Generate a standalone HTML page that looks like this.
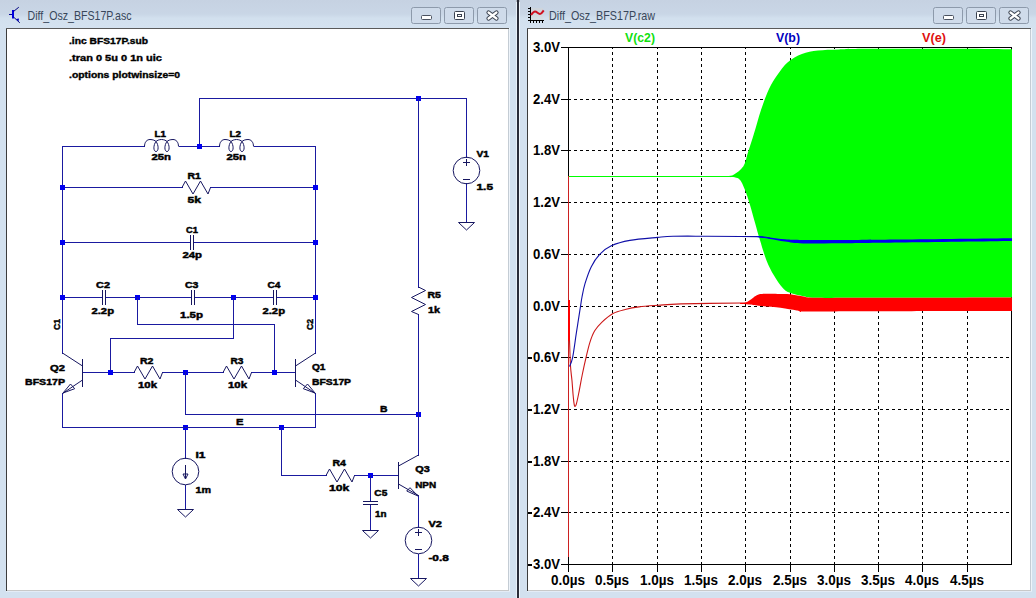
<!DOCTYPE html><html><head><meta charset="utf-8"><style>html,body{margin:0;padding:0;width:1036px;height:598px;overflow:hidden;background:#d3e1ef}svg{display:block}text{font-family:"Liberation Sans",sans-serif}</style></head><body>
<svg width="1036" height="598" viewBox="0 0 1036 598">
<rect x="0" y="0" width="1036" height="598" fill="#d3e1ef"/>
<defs><linearGradient id="tb" x1="0" y1="0" x2="0" y2="1"><stop offset="0" stop-color="#c6d2e2"/><stop offset="0.5" stop-color="#c9d6e6"/><stop offset="0.65" stop-color="#d2e0ee"/><stop offset="1" stop-color="#d4e2f0"/></linearGradient></defs>
<rect x="0" y="0" width="1036" height="28" fill="url(#tb)"/>
<rect x="6" y="28" width="503" height="563" fill="#ffffff"/>
<rect x="6" y="28" width="1" height="563" fill="#3c3c3c"/>
<rect x="6" y="28" width="503" height="1" fill="#5a5a5a"/>
<rect x="508" y="29" width="1" height="562" fill="#c4ccd4"/>
<rect x="7" y="590" width="502" height="1" fill="#c8c8c8"/>
<rect x="509" y="28" width="1" height="564" fill="#eef4fa"/>
<rect x="6" y="591" width="504" height="1" fill="#e4ecf6"/>
<rect x="411.5" y="7.5" width="29" height="16" rx="2" fill="#cfdbea" stroke="#8d9aab" stroke-width="1"/>
<rect x="444.5" y="7.5" width="29" height="16" rx="2" fill="#cfdbea" stroke="#8d9aab" stroke-width="1"/>
<rect x="477.5" y="7.5" width="29" height="16" rx="2" fill="#cfdbea" stroke="#8d9aab" stroke-width="1"/>
<rect x="421.5" y="15.5" width="10" height="4" rx="1" fill="#fff" stroke="#4a5260" stroke-width="1"/>
<rect x="454.5" y="11.5" width="10" height="8" rx="1" fill="#fff" stroke="#3a4250" stroke-width="1"/>
<rect x="457.5" y="14.5" width="4" height="2" fill="#fff" stroke="#3a4250" stroke-width="1"/>
<path d="M488.5,12.5 L496.5,18.5 M496.5,12.5 L488.5,18.5" stroke="#3a4250" stroke-width="4.2" stroke-linecap="round"/>
<path d="M488.5,12.5 L496.5,18.5 M496.5,12.5 L488.5,18.5" stroke="#ffffff" stroke-width="2.2" stroke-linecap="round"/>
<text x="27.5" y="20" font-size="12.6" font-weight="normal" text-anchor="start" fill="#38465a" textLength="104" lengthAdjust="spacingAndGlyphs" >Diff_Osz_BFS17P.asc</text>
<rect x="527" y="28" width="504" height="563" fill="#ffffff"/>
<rect x="527" y="28" width="1" height="563" fill="#3c3c3c"/>
<rect x="527" y="28" width="504" height="1" fill="#5a5a5a"/>
<rect x="1030" y="29" width="1" height="562" fill="#c4ccd4"/>
<rect x="528" y="590" width="503" height="1" fill="#c8c8c8"/>
<rect x="1031" y="28" width="1" height="564" fill="#eef4fa"/>
<rect x="527" y="591" width="505" height="1" fill="#e4ecf6"/>
<rect x="933.5" y="7.5" width="29" height="16" rx="2" fill="#cfdbea" stroke="#8d9aab" stroke-width="1"/>
<rect x="966.5" y="7.5" width="29" height="16" rx="2" fill="#cfdbea" stroke="#8d9aab" stroke-width="1"/>
<rect x="999.5" y="7.5" width="29" height="16" rx="2" fill="#cfdbea" stroke="#8d9aab" stroke-width="1"/>
<rect x="943.5" y="15.5" width="10" height="4" rx="1" fill="#fff" stroke="#4a5260" stroke-width="1"/>
<rect x="976.5" y="11.5" width="10" height="8" rx="1" fill="#fff" stroke="#3a4250" stroke-width="1"/>
<rect x="979.5" y="14.5" width="4" height="2" fill="#fff" stroke="#3a4250" stroke-width="1"/>
<path d="M1010.5,12.5 L1018.5,18.5 M1018.5,12.5 L1010.5,18.5" stroke="#3a4250" stroke-width="4.2" stroke-linecap="round"/>
<path d="M1010.5,12.5 L1018.5,18.5 M1018.5,12.5 L1010.5,18.5" stroke="#ffffff" stroke-width="2.2" stroke-linecap="round"/>
<text x="549" y="20" font-size="12.6" font-weight="normal" text-anchor="start" fill="#38465a" textLength="106" lengthAdjust="spacingAndGlyphs" >Diff_Osz_BFS17P.raw</text>
<rect x="517" y="0" width="2" height="598" fill="#2a2c38"/><rect x="519" y="0" width="1" height="598" fill="#eef4fa"/><rect x="516" y="0" width="1" height="598" fill="#e8f0f8"/><rect x="516.5" y="0" width="3" height="2" rx="1" fill="#2a2c38"/>
<rect x="12" y="10" width="2" height="8.5" fill="#0000e0"/><rect x="9" y="14" width="3" height="1" fill="#000090"/><path d="M13.5,11.5 L18.8,7.2 M13.5,17 L19.8,22.8" stroke="#000080" stroke-width="1" fill="none"/><path d="M16,19 L19,18.5 L18.5,21.5 Z" fill="#0000c0"/>
<g><rect x="531" y="8" width="12" height="12" fill="#ddd6cc" opacity="0.35"/><rect x="530" y="7" width="1" height="14" fill="#000"/><rect x="528" y="20" width="16" height="1" fill="#000"/><path d="M528,8.5h2M528,11.5h2M528,14.5h2M528,17.5h2M530.5,21v2M533.5,21v2M536.5,21v2M539.5,21v2M542.5,21v2" stroke="#000" fill="none"/><path d="M531,15 C532.5,13 533.5,11.6 535,11.6 C537,11.6 538,14 540,14 C541.5,14 542.5,12 543.7,10.4" stroke="#d01020" stroke-width="2" fill="none"/></g>
<g stroke="#000" stroke-width="1" stroke-dasharray="3 3" shape-rendering="crispEdges">
<line x1="612.5" y1="47" x2="612.5" y2="564" stroke-dashoffset="1"/>
<line x1="657.5" y1="47" x2="657.5" y2="564" stroke-dashoffset="1"/>
<line x1="701.5" y1="47" x2="701.5" y2="564" stroke-dashoffset="1"/>
<line x1="745.5" y1="47" x2="745.5" y2="564" stroke-dashoffset="1"/>
<line x1="790.5" y1="47" x2="790.5" y2="564" stroke-dashoffset="1"/>
<line x1="834.5" y1="47" x2="834.5" y2="564" stroke-dashoffset="1"/>
<line x1="878.5" y1="47" x2="878.5" y2="564" stroke-dashoffset="1"/>
<line x1="922.5" y1="47" x2="922.5" y2="564" stroke-dashoffset="1"/>
<line x1="967.5" y1="47" x2="967.5" y2="564" stroke-dashoffset="1"/>
<line x1="568" y1="99.5" x2="1011" y2="99.5"/>
<line x1="568" y1="150.5" x2="1011" y2="150.5"/>
<line x1="568" y1="202.5" x2="1011" y2="202.5"/>
<line x1="568" y1="254.5" x2="1011" y2="254.5"/>
<line x1="568" y1="306.5" x2="1011" y2="306.5"/>
<line x1="568" y1="357.5" x2="1011" y2="357.5"/>
<line x1="568" y1="409.5" x2="1011" y2="409.5"/>
<line x1="568" y1="461.5" x2="1011" y2="461.5"/>
<line x1="568" y1="512.5" x2="1011" y2="512.5"/>
</g>
<rect x="568.5" y="47.5" width="443" height="517" fill="none" stroke="#000" shape-rendering="crispEdges"/>
<g stroke="#000" shape-rendering="crispEdges">
<line x1="561" y1="47.5" x2="568" y2="47.5"/>
<line x1="561" y1="99.5" x2="568" y2="99.5"/>
<line x1="561" y1="150.5" x2="568" y2="150.5"/>
<line x1="561" y1="202.5" x2="568" y2="202.5"/>
<line x1="561" y1="254.5" x2="568" y2="254.5"/>
<line x1="561" y1="306.5" x2="568" y2="306.5"/>
<line x1="561" y1="357.5" x2="568" y2="357.5"/>
<line x1="561" y1="409.5" x2="568" y2="409.5"/>
<line x1="561" y1="461.5" x2="568" y2="461.5"/>
<line x1="561" y1="512.5" x2="568" y2="512.5"/>
<line x1="561" y1="564.5" x2="568" y2="564.5"/>
<line x1="568.5" y1="564" x2="568.5" y2="572"/>
<line x1="612.5" y1="564" x2="612.5" y2="572"/>
<line x1="657.5" y1="564" x2="657.5" y2="572"/>
<line x1="701.5" y1="564" x2="701.5" y2="572"/>
<line x1="745.5" y1="564" x2="745.5" y2="572"/>
<line x1="790.5" y1="564" x2="790.5" y2="572"/>
<line x1="834.5" y1="564" x2="834.5" y2="572"/>
<line x1="878.5" y1="564" x2="878.5" y2="572"/>
<line x1="922.5" y1="564" x2="922.5" y2="572"/>
<line x1="967.5" y1="564" x2="967.5" y2="572"/>
</g>
<text x="533" y="52" font-size="14" font-weight="bold" text-anchor="start" fill="#000" textLength="27" lengthAdjust="spacingAndGlyphs" >3.0V</text>
<text x="533" y="104" font-size="14" font-weight="bold" text-anchor="start" fill="#000" textLength="27" lengthAdjust="spacingAndGlyphs" >2.4V</text>
<text x="533" y="155" font-size="14" font-weight="bold" text-anchor="start" fill="#000" textLength="27" lengthAdjust="spacingAndGlyphs" >1.8V</text>
<text x="533" y="207" font-size="14" font-weight="bold" text-anchor="start" fill="#000" textLength="27" lengthAdjust="spacingAndGlyphs" >1.2V</text>
<text x="533" y="259" font-size="14" font-weight="bold" text-anchor="start" fill="#000" textLength="27" lengthAdjust="spacingAndGlyphs" >0.6V</text>
<text x="533" y="311" font-size="14" font-weight="bold" text-anchor="start" fill="#000" textLength="27" lengthAdjust="spacingAndGlyphs" >0.0V</text>
<rect x="528" y="357" width="4" height="2" fill="#000"/>
<text x="533" y="362" font-size="14" font-weight="bold" text-anchor="start" fill="#000" textLength="27" lengthAdjust="spacingAndGlyphs" >0.6V</text>
<rect x="528" y="409" width="4" height="2" fill="#000"/>
<text x="533" y="414" font-size="14" font-weight="bold" text-anchor="start" fill="#000" textLength="27" lengthAdjust="spacingAndGlyphs" >1.2V</text>
<rect x="528" y="461" width="4" height="2" fill="#000"/>
<text x="533" y="466" font-size="14" font-weight="bold" text-anchor="start" fill="#000" textLength="27" lengthAdjust="spacingAndGlyphs" >1.8V</text>
<rect x="528" y="512" width="4" height="2" fill="#000"/>
<text x="533" y="517" font-size="14" font-weight="bold" text-anchor="start" fill="#000" textLength="27" lengthAdjust="spacingAndGlyphs" >2.4V</text>
<rect x="528" y="564" width="4" height="2" fill="#000"/>
<text x="533" y="569" font-size="14" font-weight="bold" text-anchor="start" fill="#000" textLength="27" lengthAdjust="spacingAndGlyphs" >3.0V</text>
<text x="551" y="584.5" font-size="14" font-weight="bold" text-anchor="start" fill="#000" textLength="34" lengthAdjust="spacingAndGlyphs" >0.0µs</text>
<text x="595" y="584.5" font-size="14" font-weight="bold" text-anchor="start" fill="#000" textLength="34" lengthAdjust="spacingAndGlyphs" >0.5µs</text>
<text x="640" y="584.5" font-size="14" font-weight="bold" text-anchor="start" fill="#000" textLength="34" lengthAdjust="spacingAndGlyphs" >1.0µs</text>
<text x="684" y="584.5" font-size="14" font-weight="bold" text-anchor="start" fill="#000" textLength="34" lengthAdjust="spacingAndGlyphs" >1.5µs</text>
<text x="728" y="584.5" font-size="14" font-weight="bold" text-anchor="start" fill="#000" textLength="34" lengthAdjust="spacingAndGlyphs" >2.0µs</text>
<text x="773" y="584.5" font-size="14" font-weight="bold" text-anchor="start" fill="#000" textLength="34" lengthAdjust="spacingAndGlyphs" >2.5µs</text>
<text x="817" y="584.5" font-size="14" font-weight="bold" text-anchor="start" fill="#000" textLength="34" lengthAdjust="spacingAndGlyphs" >3.0µs</text>
<text x="861" y="584.5" font-size="14" font-weight="bold" text-anchor="start" fill="#000" textLength="34" lengthAdjust="spacingAndGlyphs" >3.5µs</text>
<text x="905" y="584.5" font-size="14" font-weight="bold" text-anchor="start" fill="#000" textLength="34" lengthAdjust="spacingAndGlyphs" >4.0µs</text>
<text x="950" y="584.5" font-size="14" font-weight="bold" text-anchor="start" fill="#000" textLength="34" lengthAdjust="spacingAndGlyphs" >4.5µs</text>
<text x="625" y="42" font-size="13" font-weight="bold" text-anchor="start" fill="#10e010" textLength="30" lengthAdjust="spacingAndGlyphs" >V(c2)</text>
<text x="776" y="42" font-size="13" font-weight="bold" text-anchor="start" fill="#0000c0" textLength="24" lengthAdjust="spacingAndGlyphs" >V(b)</text>
<text x="922" y="42" font-size="13" font-weight="bold" text-anchor="start" fill="#e01010" textLength="24" lengthAdjust="spacingAndGlyphs" >V(e)</text>
<svg x="0" y="0" width="1036" height="598" overflow="hidden"><defs><clipPath id="pc"><rect x="568" y="47" width="444" height="517"/></clipPath></defs><g clip-path="url(#pc)">
<line x1="568" y1="176.5" x2="740" y2="176.5" stroke="#00ff00" stroke-width="1.2"/>
<path d="M728.00,176.00 C729.00,175.75 731.43,176.12 734.00,174.50 C736.57,172.88 741.07,170.00 743.40,166.30 C745.73,162.60 746.23,157.75 748.00,152.30 C749.77,146.85 751.83,140.65 754.00,133.60 C756.17,126.55 758.50,117.43 761.00,110.00 C763.50,102.57 766.28,94.83 769.00,89.00 C771.72,83.17 774.17,79.47 777.30,75.00 C780.43,70.53 783.70,65.70 787.80,62.20 C791.90,58.70 796.87,55.95 801.90,54.00 C806.93,52.05 811.82,51.27 818.00,50.50 C824.18,49.73 830.33,49.68 839.00,49.40 C847.67,49.12 849.83,48.90 870.00,48.80 C890.17,48.70 936.33,48.72 960.00,48.80 C983.67,48.88 1003.33,49.22 1012.00,49.30 L1012.00,297.40 C988.00,297.47 900.72,297.73 868.00,297.80 C835.28,297.87 826.45,298.07 815.70,297.80 C804.95,297.53 807.78,297.03 803.50,296.20 C799.22,295.37 793.45,294.17 790.00,292.80 C786.55,291.43 785.47,290.88 782.80,288.00 C780.13,285.12 776.72,280.10 774.00,275.50 C771.28,270.90 768.83,266.27 766.50,260.40 C764.17,254.53 761.92,246.58 760.00,240.30 C758.08,234.02 756.67,228.58 755.00,222.70 C753.33,216.82 751.67,210.45 750.00,205.00 C748.33,199.55 746.87,194.37 745.00,190.00 C743.13,185.63 741.63,180.97 738.80,178.80 C735.97,176.63 729.80,177.30 728.00,177.00 Z" fill="#00ff00"/>
<rect x="568" y="176" width="1" height="381" fill="#cc2020"/>
<rect x="568" y="300" width="2" height="41" fill="#ff0000"/>
<path d="M569.50,340.00 C569.67,344.33 570.08,359.20 570.50,366.00 C570.92,372.80 571.55,375.80 572.00,380.80 C572.45,385.80 572.78,391.83 573.20,396.00 C573.62,400.17 573.97,404.50 574.50,405.80 C575.03,407.10 575.60,406.37 576.40,403.80 C577.20,401.23 578.33,395.20 579.30,390.40 C580.27,385.60 581.08,380.45 582.20,375.00 C583.32,369.55 584.72,363.15 586.00,357.70 C587.28,352.25 588.45,346.78 589.90,342.30 C591.35,337.82 592.68,334.17 594.70,330.80 C596.72,327.43 598.95,324.98 602.00,322.10 C605.05,319.22 609.13,315.60 613.00,313.50 C616.87,311.40 620.87,310.60 625.20,309.50 C629.53,308.40 633.50,307.60 639.00,306.90 C644.50,306.20 651.23,305.80 658.20,305.30 C665.17,304.80 666.90,304.28 680.80,303.90 C694.70,303.52 730.73,303.15 741.60,303.00 C752.47,302.85 745.27,303.00 746.00,303.00" fill="none" stroke="#cc1818" stroke-width="1.1"/>
<path d="M740.00,303.20 C740.83,303.13 743.50,303.20 745.00,302.80 C746.50,302.40 747.58,301.70 749.00,300.80 C750.42,299.90 752.00,298.40 753.50,297.40 C755.00,296.40 756.25,295.40 758.00,294.80 C759.75,294.20 760.70,293.95 764.00,293.80 C767.30,293.65 773.47,293.83 777.80,293.90 C782.13,293.97 785.93,293.82 790.00,294.20 C794.07,294.58 797.92,295.60 802.20,296.20 C806.48,296.80 804.73,297.53 815.70,297.80 C826.67,298.07 835.28,297.87 868.00,297.80 C900.72,297.73 988.00,297.47 1012.00,297.40 L1012.00,311.00 C988.00,311.03 902.07,311.13 868.00,311.20 C833.93,311.27 819.47,311.53 807.60,311.40 C795.73,311.27 801.32,311.02 796.80,310.40 C792.28,309.78 786.82,308.48 780.50,307.70 C774.18,306.92 764.15,306.23 758.90,305.70 C753.65,305.17 752.15,304.77 749.00,304.50 C745.85,304.23 741.50,304.17 740.00,304.10 Z" fill="#ff0000"/>
<path d="M569.50,366.50 C570.02,365.03 571.45,363.33 572.60,357.70 C573.75,352.07 575.12,341.03 576.40,332.70 C577.68,324.37 579.37,313.65 580.30,307.70 C581.23,301.75 581.22,301.00 582.00,297.00 C582.78,293.00 583.45,288.75 585.00,283.70 C586.55,278.65 588.85,271.60 591.30,266.70 C593.75,261.80 596.37,257.78 599.70,254.30 C603.03,250.82 606.27,248.12 611.30,245.80 C616.33,243.48 622.17,241.80 629.90,240.40 C637.63,239.00 650.52,238.08 657.70,237.40 C664.88,236.72 665.95,236.50 673.00,236.30 C680.05,236.10 685.88,236.15 700.00,236.20 C714.12,236.25 746.03,236.30 757.70,236.60 C769.37,236.90 767.95,237.77 770.00,238.00" fill="none" stroke="#1010a8" stroke-width="1.1"/>
<path d="M757.00,236.10 C759.17,236.33 765.33,236.97 770.00,237.50 C774.67,238.03 779.50,238.88 785.00,239.30 C790.50,239.72 793.83,239.88 803.00,240.00 C812.17,240.12 823.83,240.08 840.00,240.00 C856.17,239.92 871.33,239.80 900.00,239.50 C928.67,239.20 993.33,238.42 1012.00,238.20 L1012.00,241.00 C993.33,241.25 928.67,242.12 900.00,242.50 C871.33,242.88 856.17,243.13 840.00,243.30 C823.83,243.47 812.17,243.80 803.00,243.50 C793.83,243.20 790.50,242.25 785.00,241.50 C779.50,240.75 774.67,239.73 770.00,239.00 C765.33,238.27 759.17,237.42 757.00,237.10 Z" fill="#0000f0"/>
</g></svg>
<text x="69" y="44" font-size="8.5" font-weight="bold" text-anchor="start" fill="#000" textLength="79" lengthAdjust="spacingAndGlyphs" stroke="#000" stroke-width="0.35" >.inc BFS17P.sub</text>
<text x="69" y="61" font-size="8.5" font-weight="bold" text-anchor="start" fill="#000" textLength="93" lengthAdjust="spacingAndGlyphs" stroke="#000" stroke-width="0.35" >.tran 0 5u 0 1n uic</text>
<text x="69" y="78" font-size="8.5" font-weight="bold" text-anchor="start" fill="#000" textLength="111" lengthAdjust="spacingAndGlyphs" stroke="#000" stroke-width="0.35" >.options plotwinsize=0</text>
<rect x="199" y="98" width="268" height="1" fill="#1a1aa0"/>
<rect x="416" y="96" width="5" height="5" fill="#0000f0"/>
<rect x="199" y="98" width="1" height="49" fill="#1a1aa0"/>
<rect x="466" y="98" width="1" height="60" fill="#1a1aa0"/>
<rect x="62" y="146" width="83" height="1" fill="#1a1aa0"/>
<rect x="179" y="146" width="41" height="1" fill="#1a1aa0"/>
<rect x="254" y="146" width="62" height="1" fill="#1a1aa0"/>
<rect x="197" y="144" width="5" height="5" fill="#0000f0"/>
<rect x="62" y="146" width="1" height="208" fill="#1a1aa0"/>
<rect x="315" y="146" width="1" height="208" fill="#1a1aa0"/>
<rect x="62" y="187" width="121" height="1" fill="#1a1aa0"/>
<rect x="210" y="187" width="106" height="1" fill="#1a1aa0"/>
<rect x="60" y="185" width="5" height="5" fill="#0000f0"/>
<rect x="313" y="185" width="5" height="5" fill="#0000f0"/>
<rect x="62" y="242" width="129" height="1" fill="#1a1aa0"/>
<rect x="194" y="242" width="122" height="1" fill="#1a1aa0"/>
<rect x="60" y="240" width="5" height="5" fill="#0000f0"/>
<rect x="313" y="240" width="5" height="5" fill="#0000f0"/>
<rect x="62" y="297" width="41" height="1" fill="#1a1aa0"/>
<rect x="105" y="297" width="87" height="1" fill="#1a1aa0"/>
<rect x="194" y="297" width="80" height="1" fill="#1a1aa0"/>
<rect x="276" y="297" width="40" height="1" fill="#1a1aa0"/>
<rect x="60" y="295" width="5" height="5" fill="#0000f0"/>
<rect x="135" y="295" width="5" height="5" fill="#0000f0"/>
<rect x="231" y="295" width="5" height="5" fill="#0000f0"/>
<rect x="313" y="295" width="5" height="5" fill="#0000f0"/>
<rect x="137" y="297" width="1" height="28" fill="#1a1aa0"/>
<rect x="137" y="324" width="138" height="1" fill="#1a1aa0"/>
<rect x="274" y="324" width="1" height="49" fill="#1a1aa0"/>
<rect x="233" y="297" width="1" height="42" fill="#1a1aa0"/>
<rect x="110" y="338" width="124" height="1" fill="#1a1aa0"/>
<rect x="110" y="338" width="1" height="35" fill="#1a1aa0"/>
<rect x="82" y="372" width="53" height="1" fill="#1a1aa0"/>
<rect x="162" y="372" width="62" height="1" fill="#1a1aa0"/>
<rect x="251" y="372" width="45" height="1" fill="#1a1aa0"/>
<rect x="108" y="370" width="5" height="5" fill="#0000f0"/>
<rect x="183" y="370" width="5" height="5" fill="#0000f0"/>
<rect x="272" y="370" width="5" height="5" fill="#0000f0"/>
<rect x="185" y="372" width="1" height="43" fill="#1a1aa0"/>
<rect x="185" y="427" width="1" height="32" fill="#1a1aa0"/>
<rect x="185" y="414" width="234" height="1" fill="#1a1aa0"/>
<rect x="183" y="425" width="5" height="5" fill="#0000f0"/>
<rect x="416" y="412" width="5" height="5" fill="#0000f0"/>
<rect x="62" y="393" width="1" height="35" fill="#1a1aa0"/>
<rect x="315" y="393" width="1" height="35" fill="#1a1aa0"/>
<rect x="62" y="427" width="254" height="1" fill="#1a1aa0"/>
<rect x="279" y="425" width="5" height="5" fill="#0000f0"/>
<rect x="418" y="98" width="1" height="190" fill="#1a1aa0"/>
<rect x="418" y="314" width="1" height="142" fill="#1a1aa0"/>
<rect x="281" y="427" width="1" height="49" fill="#1a1aa0"/>
<rect x="281" y="475" width="46" height="1" fill="#1a1aa0"/>
<rect x="354" y="475" width="45" height="1" fill="#1a1aa0"/>
<rect x="368" y="473" width="5" height="5" fill="#0000f0"/>
<rect x="370" y="475" width="1" height="27" fill="#1a1aa0"/>
<rect x="370" y="504" width="1" height="27" fill="#1a1aa0"/>
<rect x="185" y="485" width="1" height="25" fill="#1a1aa0"/>
<rect x="466" y="183" width="1" height="40" fill="#1a1aa0"/>
<rect x="418" y="495" width="1" height="33" fill="#1a1aa0"/>
<rect x="418" y="554" width="1" height="25" fill="#1a1aa0"/>
<g stroke="#161660" stroke-width="1" fill="none">
<path d="M144.5,146.5 C144.5,142 147,139.5 150,139.5 C153,139.5 155,140.5 156,141.5 C157,140.5 159,139.5 161.5,139.5 C164,139.5 166,140.5 167,141.5 C168,140.5 170,139.5 173,139.5 C176,139.5 178.5,142 178.5,146.5"/>
<path d="M156,141.5 C153.2,145 153.2,151.5 156,151.5 C158.8,151.5 158.8,145 156,141.5 Z"/>
<path d="M167,141.5 C164.2,145 164.2,151.5 167,151.5 C169.8,151.5 169.8,145 167,141.5 Z"/>
<path d="M219.5,146.5 C219.5,142 222,139.5 225,139.5 C228,139.5 230,140.5 231,141.5 C232,140.5 234,139.5 236.5,139.5 C239,139.5 241,140.5 242,141.5 C243,140.5 245,139.5 248,139.5 C251,139.5 253.5,142 253.5,146.5"/>
<path d="M231,141.5 C228.2,145 228.2,151.5 231,151.5 C233.8,151.5 233.8,145 231,141.5 Z"/>
<path d="M242,141.5 C239.2,145 239.2,151.5 242,151.5 C244.8,151.5 244.8,145 242,141.5 Z"/>
<polyline points="182,187.5 185.5,181 193,194 200.5,181 208,194 210.5,187.5"/>
<polyline points="134,372.5 137.5,366 145,379 152.5,366 160,379 162.5,372.5"/>
<polyline points="223,372.5 226.5,366 234,379 241.5,366 249,379 251.5,372.5"/>
<polyline points="326,475.5 329.5,469 337,482 344.5,469 352,482 354.5,475.5"/>
<polyline points="418.5,287 425.5,290.5 411.5,297.5 425.5,304.5 411.5,311.5 418.5,314.5"/>
</g>
<g stroke="#161660" stroke-width="1" fill="none" shape-rendering="crispEdges">
<path d="M190.0,235 V250 M193.0,235 V250"/>
<path d="M102.0,290 V305 M105.0,290 V305"/>
<path d="M191.0,290 V305 M194.0,290 V305"/>
<path d="M273.0,290 V305 M276.0,290 V305"/>
<path d="M363,501.5 H378 M363,504.5 H378"/>
</g>
<g stroke="#161660" stroke-width="1" fill="none">
<path d="M82.5,359 V387"/>
<path d="M62.5,353 L82.5,366"/>
<path d="M82.5,380 L62.5,393.5"/>
<path d="M295.5,359 V387"/>
<path d="M315.5,353 L295.5,366"/>
<path d="M295.5,380 L315.5,393.5"/>
<path d="M63,393 L70.5,384 L74.7,388.7 Z"/>
<path d="M315,393 L307.5,384 L303.3,388.7 Z"/>
<path d="M398.5,462 V489 M398.5,466 L418.5,455 M398.5,484 L418.5,495.5"/>
<path d="M418,496 L406.7,491 L410,487.7 Z"/>
<circle cx="466.5" cy="170.5" r="13.3"/><circle cx="185.5" cy="471.5" r="13.3"/><circle cx="418.5" cy="540.5" r="13.3"/>
<path d="M463,162.5 H470 M466.5,159 V166 M463,179.5 H470"/>
<path d="M415,532.5 H422 M418.5,529 V536 M415,549.5 H422"/>
<path d="M185.5,465 V478 M183,474 L185.5,479 L188,474 Z"/>
<path d="M458.5,222.5 H474.5 L466.5,230.0 Z"/>
<path d="M177.5,509.5 H193.5 L185.5,517.0 Z"/>
<path d="M362.5,530.5 H378.5 L370.5,538.0 Z"/>
<path d="M410.5,578.5 H426.5 L418.5,586.0 Z"/>
</g>
<text x="154.5" y="137" font-size="9" font-weight="bold" text-anchor="start" fill="#000" textLength="11.5" lengthAdjust="spacingAndGlyphs" stroke="#000" stroke-width="0.45" >L1</text>
<text x="151.5" y="160" font-size="9" font-weight="bold" text-anchor="start" fill="#000" textLength="19.5" lengthAdjust="spacingAndGlyphs" stroke="#000" stroke-width="0.45" >25n</text>
<text x="229.5" y="137" font-size="9" font-weight="bold" text-anchor="start" fill="#000" textLength="11.5" lengthAdjust="spacingAndGlyphs" stroke="#000" stroke-width="0.45" >L2</text>
<text x="226.5" y="160" font-size="9" font-weight="bold" text-anchor="start" fill="#000" textLength="19.5" lengthAdjust="spacingAndGlyphs" stroke="#000" stroke-width="0.45" >25n</text>
<text x="187.5" y="179" font-size="9" font-weight="bold" text-anchor="start" fill="#000" textLength="13.5" lengthAdjust="spacingAndGlyphs" stroke="#000" stroke-width="0.45" >R1</text>
<text x="187.5" y="203" font-size="9" font-weight="bold" text-anchor="start" fill="#000" textLength="13.5" lengthAdjust="spacingAndGlyphs" stroke="#000" stroke-width="0.45" >5k</text>
<text x="186" y="233" font-size="9" font-weight="bold" text-anchor="start" fill="#000" textLength="12" lengthAdjust="spacingAndGlyphs" stroke="#000" stroke-width="0.45" >C1</text>
<text x="182.5" y="258" font-size="9" font-weight="bold" text-anchor="start" fill="#000" textLength="19.5" lengthAdjust="spacingAndGlyphs" stroke="#000" stroke-width="0.45" >24p</text>
<text x="96" y="288" font-size="9" font-weight="bold" text-anchor="start" fill="#000" textLength="14" lengthAdjust="spacingAndGlyphs" stroke="#000" stroke-width="0.45" >C2</text>
<text x="91.5" y="313.5" font-size="9" font-weight="bold" text-anchor="start" fill="#000" textLength="22.5" lengthAdjust="spacingAndGlyphs" stroke="#000" stroke-width="0.45" >2.2p</text>
<text x="185" y="288" font-size="9" font-weight="bold" text-anchor="start" fill="#000" textLength="13.5" lengthAdjust="spacingAndGlyphs" stroke="#000" stroke-width="0.45" >C3</text>
<text x="180" y="317.5" font-size="9" font-weight="bold" text-anchor="start" fill="#000" textLength="23" lengthAdjust="spacingAndGlyphs" stroke="#000" stroke-width="0.45" >1.5p</text>
<text x="267.5" y="288" font-size="9" font-weight="bold" text-anchor="start" fill="#000" textLength="13" lengthAdjust="spacingAndGlyphs" stroke="#000" stroke-width="0.45" >C4</text>
<text x="262.5" y="313.5" font-size="9" font-weight="bold" text-anchor="start" fill="#000" textLength="22.5" lengthAdjust="spacingAndGlyphs" stroke="#000" stroke-width="0.45" >2.2p</text>
<text x="140" y="364" font-size="9" font-weight="bold" text-anchor="start" fill="#000" textLength="13.5" lengthAdjust="spacingAndGlyphs" stroke="#000" stroke-width="0.45" >R2</text>
<text x="138" y="387.5" font-size="9" font-weight="bold" text-anchor="start" fill="#000" textLength="19" lengthAdjust="spacingAndGlyphs" stroke="#000" stroke-width="0.45" >10k</text>
<text x="230.5" y="364" font-size="9" font-weight="bold" text-anchor="start" fill="#000" textLength="13" lengthAdjust="spacingAndGlyphs" stroke="#000" stroke-width="0.45" >R3</text>
<text x="228" y="387.5" font-size="9" font-weight="bold" text-anchor="start" fill="#000" textLength="19" lengthAdjust="spacingAndGlyphs" stroke="#000" stroke-width="0.45" >10k</text>
<text x="50" y="370.5" font-size="9" font-weight="bold" text-anchor="start" fill="#000" textLength="15" lengthAdjust="spacingAndGlyphs" stroke="#000" stroke-width="0.45" >Q2</text>
<text x="25" y="385.2" font-size="9" font-weight="bold" text-anchor="start" fill="#000" textLength="40" lengthAdjust="spacingAndGlyphs" stroke="#000" stroke-width="0.45" >BFS17P</text>
<text x="312" y="369.7" font-size="9" font-weight="bold" text-anchor="start" fill="#000" textLength="13.5" lengthAdjust="spacingAndGlyphs" stroke="#000" stroke-width="0.45" >Q1</text>
<text x="312" y="385" font-size="9" font-weight="bold" text-anchor="start" fill="#000" textLength="39" lengthAdjust="spacingAndGlyphs" stroke="#000" stroke-width="0.45" >BFS17P</text>
<text x="476.5" y="156.7" font-size="9" font-weight="bold" text-anchor="start" fill="#000" textLength="12.5" lengthAdjust="spacingAndGlyphs" stroke="#000" stroke-width="0.45" >V1</text>
<text x="476.5" y="190.2" font-size="9" font-weight="bold" text-anchor="start" fill="#000" textLength="16.5" lengthAdjust="spacingAndGlyphs" stroke="#000" stroke-width="0.45" >1.5</text>
<text x="427.5" y="297.8" font-size="9" font-weight="bold" text-anchor="start" fill="#000" textLength="13.5" lengthAdjust="spacingAndGlyphs" stroke="#000" stroke-width="0.45" >R5</text>
<text x="428" y="312.7" font-size="9" font-weight="bold" text-anchor="start" fill="#000" textLength="12" lengthAdjust="spacingAndGlyphs" stroke="#000" stroke-width="0.45" >1k</text>
<text x="380" y="412" font-size="9" font-weight="bold" text-anchor="start" fill="#000" textLength="7.5" lengthAdjust="spacingAndGlyphs" stroke="#000" stroke-width="0.45" >B</text>
<text x="236" y="425" font-size="9" font-weight="bold" text-anchor="start" fill="#000" textLength="7.5" lengthAdjust="spacingAndGlyphs" stroke="#000" stroke-width="0.45" >E</text>
<text x="195.5" y="458.2" font-size="9" font-weight="bold" text-anchor="start" fill="#000" textLength="10" lengthAdjust="spacingAndGlyphs" stroke="#000" stroke-width="0.45" >I1</text>
<text x="195.5" y="492.5" font-size="9" font-weight="bold" text-anchor="start" fill="#000" textLength="15.5" lengthAdjust="spacingAndGlyphs" stroke="#000" stroke-width="0.45" >1m</text>
<text x="332.5" y="466" font-size="9" font-weight="bold" text-anchor="start" fill="#000" textLength="13.5" lengthAdjust="spacingAndGlyphs" stroke="#000" stroke-width="0.45" >R4</text>
<text x="329" y="491.3" font-size="9" font-weight="bold" text-anchor="start" fill="#000" textLength="20.3" lengthAdjust="spacingAndGlyphs" stroke="#000" stroke-width="0.45" >10k</text>
<text x="374.3" y="495.7" font-size="9" font-weight="bold" text-anchor="start" fill="#000" textLength="13" lengthAdjust="spacingAndGlyphs" stroke="#000" stroke-width="0.45" >C5</text>
<text x="375" y="516.7" font-size="9" font-weight="bold" text-anchor="start" fill="#000" textLength="11.5" lengthAdjust="spacingAndGlyphs" stroke="#000" stroke-width="0.45" >1n</text>
<text x="415.2" y="471.7" font-size="9" font-weight="bold" text-anchor="start" fill="#000" textLength="14.5" lengthAdjust="spacingAndGlyphs" stroke="#000" stroke-width="0.45" >Q3</text>
<text x="415.2" y="488" font-size="9" font-weight="bold" text-anchor="start" fill="#000" textLength="21" lengthAdjust="spacingAndGlyphs" stroke="#000" stroke-width="0.45" >NPN</text>
<text x="428.4" y="527" font-size="9" font-weight="bold" text-anchor="start" fill="#000" textLength="13.5" lengthAdjust="spacingAndGlyphs" stroke="#000" stroke-width="0.45" >V2</text>
<text x="428.4" y="560.5" font-size="9" font-weight="bold" text-anchor="start" fill="#000" textLength="20.5" lengthAdjust="spacingAndGlyphs" stroke="#000" stroke-width="0.45" >-0.8</text>
<text transform="translate(60.3,330) rotate(-90)" font-size="9" font-weight="bold" fill="#000" stroke="#000" stroke-width="0.45" textLength="11" lengthAdjust="spacingAndGlyphs">C1</text>
<text transform="translate(313.3,330) rotate(-90)" font-size="9" font-weight="bold" fill="#000" stroke="#000" stroke-width="0.45" textLength="11" lengthAdjust="spacingAndGlyphs">C2</text>
</svg></body></html>
